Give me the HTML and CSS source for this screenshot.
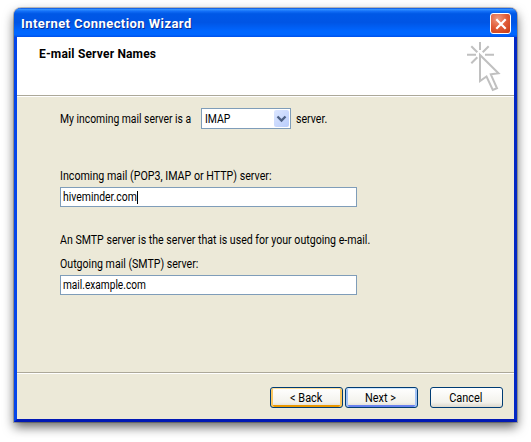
FILE: index.html
```html
<!DOCTYPE html>
<html lang="en">
<head>
<meta charset="utf-8">
<title>Internet Connection Wizard</title>
<link rel="stylesheet" href="styles.css">
</head>
<body>
<main class="window">
  <header class="titlebar">
    <h1 class="title">Internet Connection Wizard</h1>
    <button class="close" aria-label="Close"><svg width="18" height="18" viewBox="0 0 18 18"><path d="M4.3 4.3 13.7 13.7M13.7 4.3 4.3 13.7"/></svg></button>
  </header>
  <section class="heading">
    <h2 class="subtitle">E-mail Server Names</h2>
    <svg class="click" width="35" height="51" viewBox="466 41 35 51"><path d="M480 42v8M467 54.7h9M485 54.7h9M471.3 46.3l6 6M488.7 46.3l-6 6M471.3 63.3l6-6M480 55V81L486.5 76.5 492.8 90 497 88.3 490.8 74.3 498.5 73.3Z"/></svg>
  </section>
  <section class="content">
    <div class="row">
      <div class="lead"><span class="text">My incoming mail server is a</span></div>
      <div class="select"><span class="text imap">IMAP</span><span class="drop"><svg width="15" height="17" viewBox="0 0 15 17"><path d="M3.5 6.5 7.5 10.5 11.5 6.5"/></svg></span></div>
      <span class="text">server.</span>
    </div>
    <div class="label in"><span class="text incoming">Incoming mail (POP3, IMAP or HTTP) server:</span></div>
    <div class="field"><span class="text host">hiveminder.com</span><i class="caret"></i></div>
    <div class="label note"><span class="text">An SMTP server is the server that is used for your outgoing e-mail.</span></div>
    <div class="label out"><span class="text">Outgoing mail (SMTP) server:</span></div>
    <div class="field"><span class="text mail">mail.example.com</span></div>
  </section>
  <footer class="actions">
    <button class="button hot"><span class="text">&lt; Back</span></button>
    <button class="button default"><span class="text">Next &gt;</span></button>
    <button class="button cancel"><span class="text">Cancel</span></button>
  </footer>
</main>
</body>
</html>
```
FILE: styles.css
```css
* { box-sizing: border-box; }
body {
  margin: 0;
  padding: 8px 14px;
  height: 442px;
  overflow: hidden;
  background: #fff;
  font: 12px/14px Roboto, "Liberation Sans", sans-serif;
  color: #000;
}
.window {
  width: 503px;
  height: 414px;
  display: flex;
  flex-direction: column;
  border: solid #0831d9;
  border-width: 0 3px 3px;
  border-radius: 7px 7px 0 0;
  background: #ece9d8;
  box-shadow: 0 0 0 1px rgba(0,0,0,.22), 0 5px 11px rgba(0,0,0,.6);
  border-left-color: #0546ea;
  border-right-color: #0328c4;
  border-bottom-color: #0119b4;
}
.titlebar {
  flex: 0 0 29px;
  margin: 0 -3px;
  padding: 5px 6px 3px 7px;
  display: flex;
  justify-content: space-between;
  border-radius: 7px 7px 0 0;
  background: linear-gradient(#0a4fd8 0, #3290ff 5%, #1370f8 11%, #0058e6 20%, #0055e5 50%, #0066ff 80%, #0066ff 92%, #0050ea 100%);
}
.title {
  margin: 3px 0 0;
  font: bold 13px/16px Roboto, sans-serif;
  color: #fff;
  text-shadow: 1px 1px #0a2e94;
  letter-spacing: .43px;
}
.close {
  width: 21px;
  height: 21px;
  padding: 0 0 0 .5px;
  border: 1px solid #fff;
  border-radius: 3px;
  background: radial-gradient(circle at 35% 25%, #f09a80, #e05a36 50%, #c63a14);
}
.close svg { display: block; }
.close path { stroke: #fff; stroke-width: 2.2; fill: none; }
.heading {
  flex: 0 0 60px;
  display: flex;
  justify-content: space-between;
  padding: 4px 13px 0 22px;
  background: #fff;
  border-bottom: 1px solid #fff;
  box-shadow: inset 0 -1px #aca899;
}
.subtitle {
  margin: 6px 0 0;
  font: bold 12px/14px Roboto, sans-serif;
  letter-spacing: .18px;
}
.click path { stroke: #c0c0c0; stroke-width: 2; fill: none; }
.content { flex: 1; padding: 11px 43px 0; }
.text {
  display: inline-block;
  white-space: nowrap;
  transform: scaleX(.883);
  transform-origin: 0 50%;
}
.row .text { transform: translateY(-.5px) scaleX(.883); }
.row .lead .text { transform: translateY(-.5px) scaleX(.863); }
.row .imap { transform: scaleX(.87); }
.host { width: 74px; transform: translateY(-1px) scaleX(.868); }
.mail { transform: translateY(-1px) scaleX(.843); }
.incoming { transform: scaleX(.89); }
.row { display: flex; height: 21px; align-items: center; }
.lead { width: 141px; }
.select {
  width: 90px;
  height: 21px;
  margin-right: 4.5px;
  padding: 1px 1px 1px 3px;
  display: flex;
  align-items: center;
  justify-content: space-between;
  border: 1px solid #7f9db9;
  background: #fff;
}
.drop {
  width: 15px;
  height: 17px;
  border-radius: 2px;
  background: linear-gradient(135deg, #dce6ff, #b9cdfb);
}
.drop svg { display: block; }
.drop path { stroke: #4d6185; stroke-width: 2.3; fill: none; }
.label { height: 14px; }
.in { margin: 40px 0 4px; }
.note { margin: 26px 0 10px; }
.out { margin-bottom: 4px; }
.field {
  width: 297px;
  height: 20px;
  padding: 3px 2px 2px;
  display: flex;
  border: 1px solid #7f9db9;
  background: #fff;
}
.caret { width: 1px; height: 13px; background: #000; }
.actions {
  flex: 0 0 47px;
  display: flex;
  gap: 2px;
  justify-content: flex-end;
  padding: 14px 11px 0 0;
  border-top: 1px solid #aca899;
  box-shadow: inset 0 1px #fff;
}
.button {
  width: 73px;
  height: 21px;
  padding: 0;
  border: 1px solid #003c74;
  border-radius: 3px;
  background: linear-gradient(#fff, #f3f2ec 75%, #dcd8cc);
  font: inherit;
  color: #000;
}
.button .text { transform: translateX(-.5px) scaleX(.91); transform-origin: 50% 50%; }
.hot { box-shadow: inset 0 1px #fedf9c, inset 2px 0 #fac761, inset -2px 0 #fac761, inset 0 -2px #e99700; }
.default { box-shadow: inset 0 1px #cee7ff, inset 2px 0 #a4c3f5, inset -2px 0 #a4c3f5, inset 0 -2px #6982ee; }
.cancel { margin-left: 10px; }
```
